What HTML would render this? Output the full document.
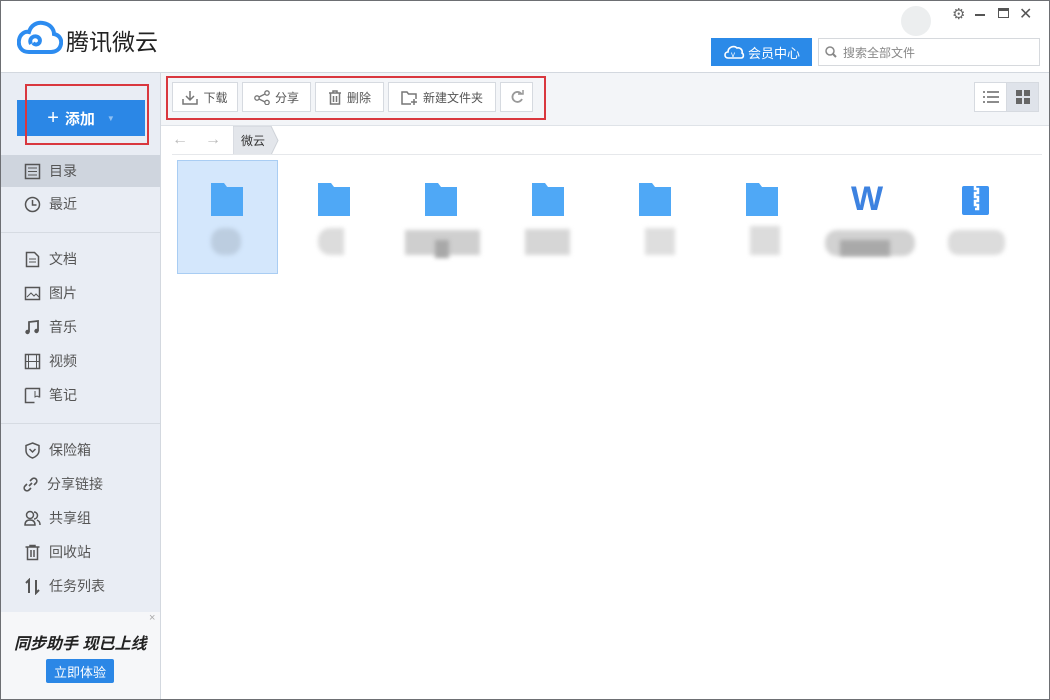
<!DOCTYPE html>
<html><head><meta charset="utf-8"><style>
*{margin:0;padding:0;box-sizing:border-box}
body{width:1050px;height:700px;position:relative;overflow:hidden;background:#fff;font-family:"Liberation Sans","Noto Sans CJK SC",sans-serif;color:#333}
.a{position:absolute}
.win{left:0;top:0;width:1050px;height:700px;border:1px solid #6d6f73;z-index:50;pointer-events:none}
.side{left:0;top:72px;width:161px;height:628px;background:#e9edf4;border-right:1px solid #d3d8df;border-top:1px solid #d3d8df}
.tb{left:161px;top:72px;width:889px;height:54px;background:#f3f5f8;border-top:1px solid #d3d8df;border-bottom:1px solid #dfe3e8}
.btn{top:82px;height:30px;background:#fff;border:1px solid #d6dae0;font-size:12px;color:#555;display:flex;align-items:center;justify-content:center;gap:5px}
.it{left:0;width:160px;height:32px;display:flex;align-items:center;padding-left:24px;font-size:14px;color:#555;gap:8px}
.it svg{width:17px;height:17px}
.sep{left:0;width:160px;height:1px;background:#d6dbe2}
.fold{width:34px;height:33px}
.blur{filter:blur(2px)}
</style></head><body>
<div class="a win"></div>
<svg class="a" style="left:17px;top:20px" width="46" height="34" viewBox="0 0 46 34"><path d="M12 32 C4 32 1 26 2 20 C3 14 8 11 12 12 C14 5 20 2 26 3 C33 4 37 9 37 14 C42 15 45 19 44 24 C43 30 38 32 34 32 Z" fill="none" stroke="#2d8cf0" stroke-width="4"/><path d="M14 24 C11 18 18 14 22 18 C25 22 20 27 16 23" fill="none" stroke="#2d8cf0" stroke-width="4"/></svg>
<div class="a" style="left:66px;top:23px;font-size:23px;color:#222;letter-spacing:0px">腾讯微云</div>
<div class="a" style="left:901px;top:6px;width:30px;height:30px;border-radius:50%;background:#eceeef"></div>
<div class="a" style="left:952px;top:5px;font-size:15px;color:#666">⚙</div>
<div class="a" style="left:975px;top:14px;width:10px;height:2px;background:#555"></div>
<div class="a" style="left:998px;top:8px;width:11px;height:10px;border:1.5px solid #555;border-top-width:3px"></div>
<div class="a" style="left:1019px;top:4px;font-size:16px;color:#555">✕</div>
<div class="a" style="left:711px;top:38px;width:101px;height:28px;background:#2b8ae8;color:#fff;font-size:13px;display:flex;align-items:center;justify-content:center;gap:3px"><svg width="22" height="16" viewBox="0 0 22 16"><path d="M5 14 C1 14 1 8 5 8 C5 3 11 1 14 4 C17 3 20 6 19 9 C21 10 21 14 18 14 Z" fill="none" stroke="#fff" stroke-width="1.6"/><text x="8" y="13" font-size="8" fill="#fff" font-family="Liberation Sans">v</text></svg>会员中心</div>
<div class="a" style="left:818px;top:38px;width:222px;height:28px;border:1px solid #d6d9dd;font-size:12px;color:#888;display:flex;align-items:center;padding-left:6px;gap:6px"><svg width="12" height="12"><circle cx="5" cy="5" r="4" fill="none" stroke="#888" stroke-width="1.5"/><path d="M8 8 L11 11" stroke="#888" stroke-width="2"/></svg>搜索全部文件</div>
<div class="a side"></div>
<div class="a" style="left:17px;top:100px;width:128px;height:36px;background:#2b87e6;color:#fff;font-size:15px;font-weight:bold;display:flex;align-items:center;justify-content:center;gap:6px"><span style="font-size:20px;font-weight:normal">+</span>添加 <span style="font-size:8px;color:#8fc0f2;margin-left:6px">▼</span></div>
<div class="a" style="left:25px;top:84px;width:124px;height:61px;border:2px solid #d9373e"></div>
<div class="a" style="left:0;top:155px;width:160px;height:32px;background:#cfd5de"></div>
<div class="a it" style="top:155px"><svg viewBox="0 0 17 17"><rect x="1.5" y="1.5" width="14" height="14" fill="none" stroke="#555" stroke-width="1.5"/><path d="M4 5h9M4 8.5h9M4 12h9" stroke="#555"/></svg>目录</div>
<div class="a it" style="top:188px"><svg viewBox="0 0 17 17"><circle cx="8.5" cy="8.5" r="7" fill="none" stroke="#555" stroke-width="1.5"/><path d="M8.5 4v5h4" fill="none" stroke="#555" stroke-width="1.5"/></svg>最近</div>
<div class="a sep" style="top:232px"></div>
<div class="a it" style="top:243px"><svg viewBox="0 0 17 17"><path d="M2.5 1.5h8l4 4v10h-12z" fill="none" stroke="#555" stroke-width="1.5"/><path d="M5 8h7M5 11h7" stroke="#555"/></svg>文档</div>
<div class="a it" style="top:277px"><svg viewBox="0 0 17 17"><rect x="1.5" y="2.5" width="14" height="12" fill="none" stroke="#555" stroke-width="1.5"/><path d="M3 12l4-4 3 3 2-2 3 3" fill="none" stroke="#555"/></svg>图片</div>
<div class="a it" style="top:311px"><svg viewBox="0 0 17 17"><path d="M5 13V3l9-1v10" fill="none" stroke="#555" stroke-width="1.8"/><circle cx="3.5" cy="13" r="2.2" fill="#555"/><circle cx="12.5" cy="12" r="2.2" fill="#555"/></svg>音乐</div>
<div class="a it" style="top:345px"><svg viewBox="0 0 17 17"><rect x="1.5" y="1.5" width="14" height="14" fill="none" stroke="#555" stroke-width="1.5"/><path d="M4.5 2v13M12.5 2v13M2 8.5h13" stroke="#555"/></svg>视频</div>
<div class="a it" style="top:379px"><svg viewBox="0 0 17 17"><path d="M1.5 1.5h14v9M1.5 1.5v14h9" fill="none" stroke="#555" stroke-width="1.5"/><path d="M11 4v6l2-1 2 1" fill="none" stroke="#555"/></svg>笔记</div>
<div class="a sep" style="top:423px"></div>
<div class="a it" style="top:434px"><svg viewBox="0 0 17 17"><path d="M8.5 1l6.5 2.5v5c0 4-3.5 6.5-6.5 7.5C5.5 15 2 12.5 2 8.5v-5z" fill="none" stroke="#555" stroke-width="1.5"/><path d="M5.5 7l3 3 3-3" fill="none" stroke="#555" stroke-width="1.5"/></svg>保险箱</div>
<div class="a it" style="top:468px;padding-left:22px"><svg viewBox="0 0 17 17"><path d="M7 10l3-3M5 8l-2 2a2.5 2.5 0 0 0 4 4l2-2M12 9l2-2a2.5 2.5 0 0 0-4-4l-2 2" fill="none" stroke="#555" stroke-width="1.6"/></svg>分享链接</div>
<div class="a it" style="top:502px"><svg viewBox="0 0 17 17"><circle cx="6" cy="5" r="3.5" fill="none" stroke="#555" stroke-width="1.5"/><path d="M1 15c0-4 2.5-5 5-5s5 1 5 5zM10 2a3.5 3.5 0 0 1 0 7M13 10c2 1 3 2 3 5" fill="none" stroke="#555" stroke-width="1.5"/></svg>共享组</div>
<div class="a it" style="top:536px"><svg viewBox="0 0 17 17"><path d="M1.5 3h14M6 3V1.5h5V3M3.5 3v12.5h10V3M7 6v7M10 6v7" fill="none" stroke="#555" stroke-width="1.5"/></svg>回收站</div>
<div class="a it" style="top:570px"><svg viewBox="0 0 17 17"><path d="M5 15V2L2 5M12 2v13l3-3" fill="none" stroke="#555" stroke-width="2"/></svg>任务列表</div>
<div class="a" style="left:1px;top:612px;width:159px;height:87px;background:#f6f7f9"></div>
<div class="a" style="left:149px;top:612px;font-size:11px;color:#aaa">×</div>
<div class="a" style="left:14px;top:630px;font-size:16px;font-weight:bold;font-style:italic;color:#222">同步助手 现已上线</div>
<div class="a" style="left:46px;top:659px;width:68px;height:24px;background:#2b87e6;color:#fff;font-size:13px;display:flex;align-items:center;justify-content:center;border-radius:2px">立即体验</div>
<div class="a tb"></div>
<div class="a btn" style="left:172px;width:66px"><svg width="16" height="15"><path d="M8 1v9M4 6l4 4 4-4M1 9v5h14V9" fill="none" stroke="#777" stroke-width="1.5"/></svg>下载</div>
<div class="a btn" style="left:242px;width:69px"><svg width="16" height="15"><circle cx="3" cy="8" r="2.2" fill="none" stroke="#777" stroke-width="1.3"/><circle cx="13" cy="3" r="2.2" fill="none" stroke="#777" stroke-width="1.3"/><circle cx="13" cy="12.5" r="2.2" fill="none" stroke="#777" stroke-width="1.3"/><path d="M5 7l6-3M5 9l6 3" stroke="#777" stroke-width="1.3"/></svg>分享</div>
<div class="a btn" style="left:315px;width:69px"><svg width="14" height="15"><path d="M1 3h12M5 3V1h4v2M2.5 3v11h9V3M5.5 6v6M8.5 6v6" fill="none" stroke="#777" stroke-width="1.5"/></svg>删除</div>
<div class="a btn" style="left:388px;width:108px"><svg width="17" height="15"><path d="M10 14H1V2h5l1.5 2H15v5" fill="none" stroke="#777" stroke-width="1.5"/><path d="M13 9v6M10 12h6" stroke="#777" stroke-width="1.5"/></svg>新建文件夹</div>
<div class="a btn" style="left:500px;width:33px"><svg width="14" height="14"><path d="M11.5 4A5 5 0 1 0 12 9" fill="none" stroke="#999" stroke-width="1.8"/><path d="M8 4h5V0" fill="none" stroke="#999" stroke-width="1.5"/></svg></div>
<div class="a" style="left:166px;top:76px;width:380px;height:44px;border:2px solid #d9373e"></div>
<div class="a btn" style="left:974px;width:33px"><svg width="16" height="12"><path d="M0 1h2M4 1h12M0 6h2M4 6h12M0 11h2M4 11h12" stroke="#666" stroke-width="1.4"/></svg></div>
<div class="a btn" style="left:1006px;width:33px;background:#dfe3ea"><svg width="14" height="14"><rect x="0" y="0" width="6" height="6" fill="#666"/><rect x="8" y="0" width="6" height="6" fill="#666"/><rect x="0" y="8" width="6" height="6" fill="#666"/><rect x="8" y="8" width="6" height="6" fill="#666"/></svg></div>
<div class="a" style="left:172px;top:131px;font-size:16px;color:#bbb">←</div>
<div class="a" style="left:205px;top:131px;font-size:16px;color:#bbb">→</div>
<svg class="a" style="left:233px;top:126px" width="46" height="29"><path d="M0 0H38L45 14.5L38 29H0Z" fill="#e3e6eb" stroke="#cfd3d9"/><text x="8" y="19" font-size="12" fill="#333" font-family="Noto Sans CJK SC">微云</text></svg>
<div class="a" style="left:172px;top:154px;width:870px;height:1px;background:#e6e8eb"></div>
<div class="a" style="left:177px;top:160px;width:101px;height:114px;background:#d4e7fc;border:1px solid #a9cdf3"></div>
<svg width="0" height="0" style="position:absolute"><defs><symbol id="f" viewBox="0 0 34 33"><path d="M1 0h13l3 4h16v29H1z" fill="#4fa8f6"/></symbol></defs></svg>
<svg class="a fold" style="left:210px;top:183px"><use href="#f"/></svg>
<svg class="a fold" style="left:317px;top:183px"><use href="#f"/></svg>
<svg class="a fold" style="left:424px;top:183px"><use href="#f"/></svg>
<svg class="a fold" style="left:531px;top:183px"><use href="#f"/></svg>
<svg class="a fold" style="left:638px;top:183px"><use href="#f"/></svg>
<svg class="a fold" style="left:745px;top:183px"><use href="#f"/></svg>
<div class="a" style="left:851px;top:180px;font-size:34px;font-weight:bold;color:#3d82e0">W</div>
<svg class="a" style="left:962px;top:186px" width="27" height="29"><rect width="27" height="29" rx="2" fill="#3e93f0"/><path d="M13 0v3h3v4h-3v4h3v4h-3v4h3v4h-3" fill="none" stroke="#fff" stroke-width="2.5"/></svg>
<div class="a blur" style="left:211px;top:228px;width:30px;height:27px;border-radius:12px;background:#bccde0"></div>
<div class="a blur" style="left:318px;top:228px;width:26px;height:27px;border-radius:12px 0 0 12px;background:#dcdcdc"></div>
<div class="a blur" style="left:405px;top:230px;width:75px;height:25px;background:#cfcfcf"></div>
<div class="a blur" style="left:435px;top:240px;width:14px;height:18px;background:#a8a8a8"></div>
<div class="a blur" style="left:525px;top:229px;width:45px;height:26px;background:#d6d6d6"></div>
<div class="a blur" style="left:645px;top:228px;width:30px;height:27px;background:#dedede"></div>
<div class="a blur" style="left:750px;top:226px;width:30px;height:29px;background:#dcdcdc"></div>
<div class="a blur" style="left:825px;top:230px;width:90px;height:26px;border-radius:12px;background:#d2d2d2"></div>
<div class="a blur" style="left:840px;top:240px;width:50px;height:16px;background:#a9a9a9"></div>
<div class="a blur" style="left:948px;top:230px;width:57px;height:25px;border-radius:10px;background:#dcdcdc"></div>
</body></html>
